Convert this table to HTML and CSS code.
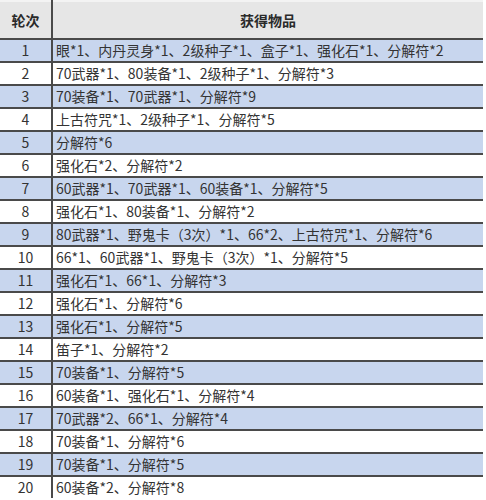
FILE: index.html
```
<!DOCTYPE html>
<html lang="zh">
<head>
<meta charset="utf-8">
<link rel="stylesheet" href="styles.css">
</head>
<body>
<table class="loot">
  <thead>
    <tr><th class="num">轮次</th><th class="items">获得物品</th></tr>
  </thead>
  <tbody>
    <tr class="alt"><td class="num">1</td><td class="items">眼*1、内丹灵身*1、2级种子*1、盒子*1、强化石*1、分解符*2</td></tr>
    <tr><td class="num">2</td><td class="items">70武器*1、80装备*1、2级种子*1、分解符*3</td></tr>
    <tr class="alt"><td class="num">3</td><td class="items">70装备*1、70武器*1、分解符*9</td></tr>
    <tr><td class="num">4</td><td class="items">上古符咒*1、2级种子*1、分解符*5</td></tr>
    <tr class="alt"><td class="num">5</td><td class="items">分解符*6</td></tr>
    <tr><td class="num">6</td><td class="items">强化石*2、分解符*2</td></tr>
    <tr class="alt"><td class="num">7</td><td class="items">60武器*1、70武器*1、60装备*1、分解符*5</td></tr>
    <tr><td class="num">8</td><td class="items">强化石*1、80装备*1、分解符*2</td></tr>
    <tr class="alt"><td class="num">9</td><td class="items">80武器*1、野鬼卡（3次）*1、66*2、上古符咒*1、分解符*6</td></tr>
    <tr><td class="num">10</td><td class="items">66*1、60武器*1、野鬼卡（3次）*1、分解符*5</td></tr>
    <tr class="alt"><td class="num">11</td><td class="items">强化石*1、66*1、分解符*3</td></tr>
    <tr><td class="num">12</td><td class="items">强化石*1、分解符*6</td></tr>
    <tr class="alt"><td class="num">13</td><td class="items">强化石*1、分解符*5</td></tr>
    <tr><td class="num">14</td><td class="items">笛子*1、分解符*2</td></tr>
    <tr class="alt"><td class="num">15</td><td class="items">70装备*1、分解符*5</td></tr>
    <tr><td class="num">16</td><td class="items">60装备*1、强化石*1、分解符*4</td></tr>
    <tr class="alt"><td class="num">17</td><td class="items">70武器*2、66*1、分解符*4</td></tr>
    <tr><td class="num">18</td><td class="items">70装备*1、分解符*6</td></tr>
    <tr class="alt"><td class="num">19</td><td class="items">70装备*1、分解符*5</td></tr>
    <tr class="last"><td class="num">20</td><td class="items">60装备*2、分解符*8</td></tr>
  </tbody>
</table>
</body>
</html>
```
FILE: styles.css
```
html, body {
  margin: 0;
  padding: 0;
  background: #ffffff;
}
body {
  font-family: "Noto Sans CJK SC", "Noto Sans", sans-serif;
  font-size: 14px;
  color: #333333;
}
.loot {
  width: 483px;
  border-collapse: collapse;
  table-layout: fixed;
}
.loot th, .loot td {
  padding: 0;
  white-space: nowrap;
  overflow: hidden;
}
.loot thead th {
  height: 36px;
  background: #e6e6e6;
  border-bottom: 2px solid #4a4a4a;
  font-weight: bold;
  color: #2a2a2a;
  text-align: center;
  border-top: 2px solid #f3f3f3;
}
.loot td {
  height: 21px;
  line-height: 21px;
  border-bottom: 2px solid #4a4a4a;
}
.loot tr.last td {
  border-bottom: none;
}
.loot tr.alt td {
  background: #c8d6ee;
}
.loot .num {
  width: 51px;
  text-align: center;
  border-right: 2px solid #4a4a4a;
}
.loot td.items {
  text-align: left;
  padding-left: 3px;
}
```
